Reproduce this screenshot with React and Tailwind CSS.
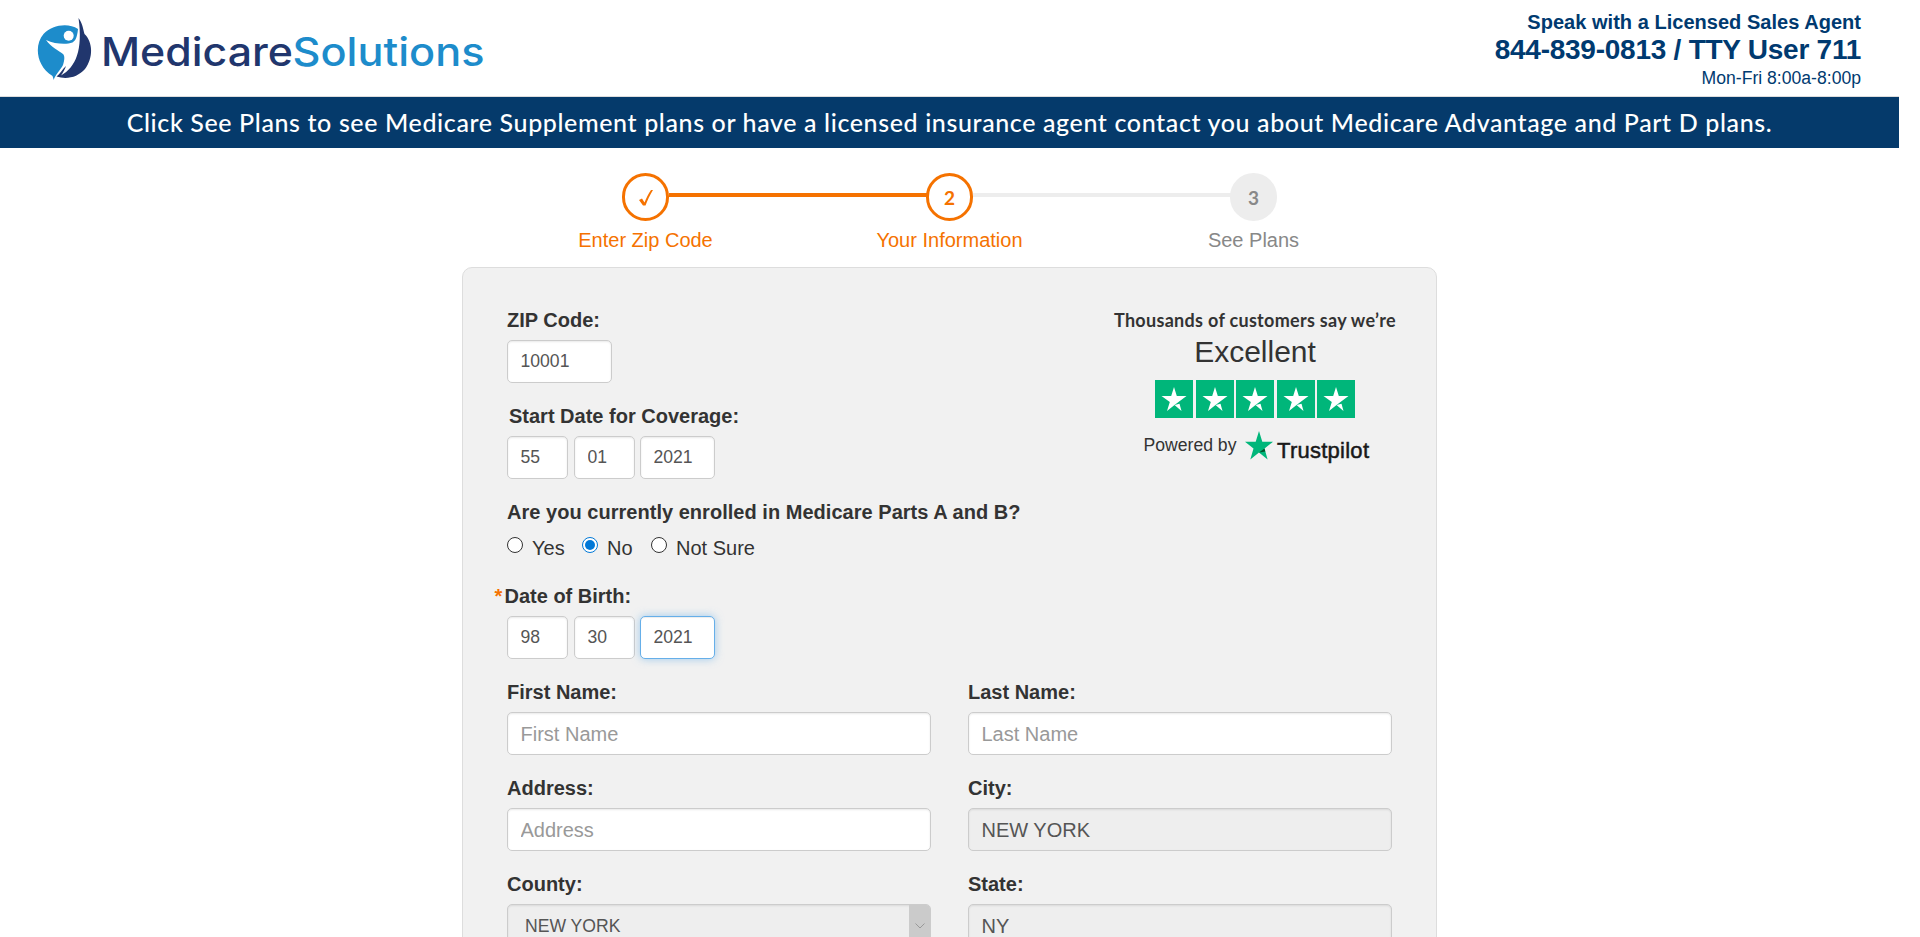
const INPUT =
  'h-[43px] rounded-[5px] border border-[#ccc] bg-white px-[12.5px] shadow-[inset_0_1px_2px_rgba(0,0,0,0.09)] outline-none placeholder:text-[#999] text-[#555]';

function Logo() {
  return (
    <svg width="450" height="66" viewBox="36 16 450 66" className="block">
      <path d="M78 29C68 22.500 52 25 43.500 34C34 45 36 66 52.500 76L53.800 80C54.500 76 61 69 63 65C64.500 60 65 56 63 54C59 51 51 47 46 40C55 44 66 45 72.500 42.500C77 40 77.500 33 78 29Z" fill="#1d8ccb" />
      <circle cx="68.700" cy="35.700" r="5" fill="#fff" />
      <path d="M78.500 18C82.500 23 83 29 84.500 34C93 42 93.500 58 85 69C78 77 67 80 56.500 76.500C60 74 62.500 69 66 66C65 69 63.500 72 61 75.500C76 67 83 50 78.500 18Z" fill="#21366d" />
      <text x="101" y="65.500" fontFamily="Inter, sans-serif" fontSize="39.500" fontWeight="500" textLength="192" lengthAdjust="spacingAndGlyphs" fill="#21366d">Medicare</text>
      <text x="292.500" y="65.500" fontFamily="Inter, sans-serif" fontSize="39.500" fontWeight="500" textLength="192" lengthAdjust="spacingAndGlyphs" fill="#1d8ccb">Solutions</text>
    </svg>
  );
}

function StarBox() {
  return (
    <svg width="38" height="38" viewBox="0 0 38 38">
      <rect width="38" height="38" fill="#00b67a" />
      <path d="M19 7L21.800 16H31.500L19.500 25L12 31L14.800 22L6.500 16H16.200Z" fill="#fff" />
      <path d="M19.500 25L24.500 23.800L26.500 31Z" fill="#fff" />
    </svg>
  );
}

function Radio({ label, checked, className }) {
  return (
    <label className={'flex items-start ' + className}>
      <span
        className={
          'flex size-4 items-center justify-center rounded-full border bg-white ' +
          (checked ? 'border-[#0078d7]' : 'border-[#333]')
        }
      >
        {checked && <span className="size-[10px] rounded-full bg-[#0078d7]" />}
      </span>
      <span className="ml-[9px] mt-[-3px] leading-7">{label}</span>
    </label>
  );
}

function DateInputs({ values, focusLast }) {
  return (
    <div className="mt-1.5 flex text-[17.6px]">
      <input className={INPUT + ' w-[61px]'} defaultValue={values[0]} />
      <input className={INPUT + ' ml-1.5 w-[61px]'} defaultValue={values[1]} />
      <input
        className={
          focusLast
            ? 'h-[43px] rounded-[5px] border border-[#66afe9] bg-white px-[12.5px] text-[#555] outline-none ml-[5px] w-[75px] shadow-[inset_0_1px_1px_rgba(0,0,0,0.075),0_0_8px_rgba(102,175,233,0.6)]'
            : INPUT + ' ml-[5px] w-[75px]'
        }
        defaultValue={values[2]}
      />
    </div>
  );
}

function Field({ label, value, disabled }) {
  return (
    <div className="h-24 w-[424px]">
      <div className="font-bold leading-7">{label}</div>
      {disabled ? (
        <input className={INPUT.replace('bg-white', '') + ' mt-1.5 block w-full bg-[#eee] pt-0.5'} defaultValue={value} readOnly />
      ) : (
        <input className={INPUT + ' mt-1.5 block w-full pt-0.5'} placeholder={value} />
      )}
    </div>
  );
}

function Step({ label, children, circle, text }) {
  return (
    <div className={'flex w-[304px] flex-col items-center ' + text}>
      <div className={'flex h-12 w-[47px] items-center justify-center rounded-full ' + circle}>{children}</div>
      <div className="mt-[5px] text-[20px] leading-7">{label}</div>
    </div>
  );
}

export default function App() {
  return (
    <div className="h-[937px] w-full overflow-hidden bg-white font-['Liberation_Sans',Arial,sans-serif] text-[20px] text-[#333]">
      <div className="w-[1899px]">
        <header className="flex h-[97px] justify-between border-b border-[#ddd] pl-9 pr-[38px] text-[#003a70]">
          <div className="pt-4">
            <Logo />
          </div>
          <div className="pt-2 text-right">
            <div className="text-[20px] font-bold leading-7 tracking-[0.03px]">Speak with a Licensed Sales Agent</div>
            <div className="text-[28px] font-bold leading-7 tracking-[-0.25px]">844-839-0813 / TTY User 711</div>
            <div className="text-[17.6px] leading-7">Mon-Fri 8:00a-8:00p</div>
          </div>
        </header>
        <div className="flex h-[51px] items-center justify-center bg-[#053a6b] font-['Lato',sans-serif] text-[25px] font-medium text-white">
          <span className="whitespace-nowrap tracking-[0.62px]">
            Click See Plans to see Medicare Supplement plans or have a licensed insurance agent contact you about Medicare Advantage and Part D plans.
          </span>
        </div>

        <div className="relative mx-auto mt-[25px] flex h-[94px] w-[912px]">
          <div className="absolute left-[175px] top-5 h-1 w-[258px] bg-[#f57200]" />
          <div className="absolute left-[479px] top-5 h-1 w-[258px] bg-[#ededed]" />
          <Step label="Enter Zip Code" text="text-[#f57200]" circle="border-[3px] border-[#f57200]">
            <svg width="14" height="16" viewBox="0 0 14 16" className="mt-0.5">
              <path d="M0 10L3 8.500L5.500 12.500C7.500 7.500 9.500 3.500 12 0H14C11 5 8.500 10 6.500 15.500H4Z" fill="#f57200" />
            </svg>
          </Step>
          <Step label="Your Information" text="text-[#f57200]" circle="border-[3px] border-[#f57200]">
            <span className="mt-0.5 font-['Lato',sans-serif] text-[19px] font-bold">2</span>
          </Step>
          <Step label="See Plans" text="text-[#888]" circle="bg-[#ededed]">
            <span className="mt-0.5 font-['Lato',sans-serif] text-[19px] font-bold">3</span>
          </Step>
        </div>

        <main className="mx-auto h-[760px] w-[975px] rounded-[10px] border border-[#ddd] bg-[#f1f1f1] pl-[44px] pt-[38px]">
          <div className="flex h-[276px] justify-between pr-[40px]">
            <div>
              <div className="h-24">
                <div className="font-bold leading-7">ZIP Code:</div>
                <input className={INPUT + ' mt-1.5 block w-[105px] text-[17.6px]'} defaultValue="10001" />
              </div>
              <div className="h-24">
                <div className="ml-0.5 font-bold leading-7">Start Date for Coverage:</div>
                <DateInputs values={['55', '01', '2021']} />
              </div>
              <div className="font-bold leading-7 tracking-[0.03px]">Are you currently enrolled in Medicare Parts A and B?</div>
              <div className="flex pt-[11px]">
                <Radio label="Yes" className="w-[75px]" />
                <Radio label="No" checked className="w-[69px]" />
                <Radio label="Not Sure" className="" />
              </div>
            </div>
            <div className="flex w-[282px] flex-col items-center">
              <div className="whitespace-nowrap font-['Lato',sans-serif] text-[18px] font-bold leading-7 tracking-[0.3px]">Thousands of customers say we’re</div>
              <div className="mt-px text-[30px] leading-[34px]">Excellent</div>
              <div className="mt-[11px] flex gap-[2.5px]">
                <StarBox />
                <StarBox />
                <StarBox />
                <StarBox />
                <StarBox />
              </div>
              <div className="ml-1 mt-[13px] flex items-start">
                <span className="text-[17.6px] leading-7">Powered by</span>
                <svg width="126" height="34" viewBox="0 0 126 34" className="ml-2">
                  <path d="M15 0L18.300 10.800H29L20.500 17.500L23.600 28.500L15 21.500L6.300 28.500L9.500 17.500L1 10.800H11.700Z" fill="#00b67a" />
                  <path d="M20.500 17.500L21.300 20.500L15 21.500Z" fill="#005128" />
                  <text x="33" y="26.500" fontFamily="Liberation Sans, Arial, sans-serif" fontSize="22" textLength="92" fill="#191919" stroke="#191919" strokeWidth="0.5">Trustpilot</text>
                </svg>
              </div>
            </div>
          </div>
          <div className="h-24">
            <div className="ml-[-13.5px] flex font-bold leading-7">
              <span className="w-[11px] pl-px text-[#f57200]">*</span>
              <span>Date of Birth:</span>
            </div>
            <DateInputs values={['98', '30', '2021']} focusLast />
          </div>
          <div className="flex gap-[37px]">
            <Field label="First Name:" value="First Name" />
            <Field label="Last Name:" value="Last Name" />
          </div>
          <div className="flex gap-[37px]">
            <Field label="Address:" value="Address" />
            <Field label="City:" value="NEW YORK" disabled />
          </div>
          <div className="flex gap-[37px]">
            <div className="w-[424px]">
              <div className="font-bold leading-7">County:</div>
              <div className="mt-1.5 flex h-[43px] justify-between overflow-hidden rounded-[5px] border border-[#ccc] bg-[#eee] text-[17.6px] text-[#555] shadow-[inset_0_1px_2px_rgba(0,0,0,0.09)]">
                <span className="pl-[17px] leading-[42px]">NEW YORK</span>
                <span className="flex w-[21px] items-center justify-center bg-[#cbcbcb]">
                  <svg width="10" height="6" viewBox="0 0 10 6" fill="none" stroke="#999">
                    <path d="M0.500 0.500L5 5L9.500 0.500" />
                  </svg>
                </span>
              </div>
            </div>
            <Field label="State:" value="NY" disabled />
          </div>
        </main>
      </div>
    </div>
  );
}
